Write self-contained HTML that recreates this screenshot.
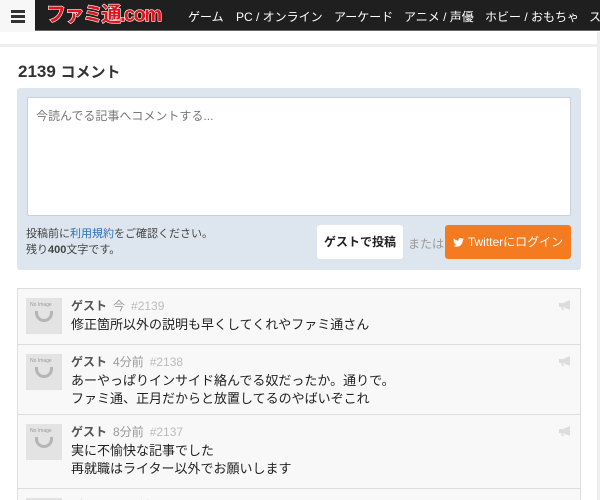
<!DOCTYPE html>
<html><head><meta charset="utf-8"><style>
*{box-sizing:border-box;margin:0;padding:0}
html,body{width:600px;height:500px;overflow:hidden}
body{background:#fff;font-family:"Liberation Sans","Noto Sans CJK JP",sans-serif;position:relative;color:#222}
.abs{position:absolute}
.hdr{left:0;top:0;width:600px;height:31px;background:#1f1f1f;border-bottom:1px solid #666}
.ham{left:0;top:0;width:35px;height:32px;background:#f7f7f7}
.ham i{position:absolute;left:11px;width:14px;height:3px;background:#333}
.logo{left:46px;top:3px;font-weight:bold;font-size:20px;color:#e0141c;-webkit-text-stroke:1.2px #fff;paint-order:stroke fill;letter-spacing:-1.5px;line-height:24px}
.nav{top:8px;font-size:12px;color:#fff;white-space:nowrap}
.line{left:0;top:44px;width:598px;height:3px;background:#eee}
.rs{left:597px;top:32px;width:3px;height:468px;background:#eee}
h1{position:absolute;left:18px;top:61px;font-size:17px;font-weight:bold;color:#333}
h1 span{font-size:15px}
.box{left:17px;top:88px;width:564px;height:182px;background:#dde6ee;border-radius:3px}
.ta{left:27px;top:97px;width:544px;height:119px;background:#fff;border:1px solid #c9d1d8;border-radius:2px;font-size:12px;color:#777;padding:9px 8px}
.note{left:26px;top:226px;font-size:11px;color:#444;line-height:16px}
.note a{color:#2a6ebb}
.gb{left:317px;top:225px;width:86px;height:34px;background:#fff;border-radius:3px;font-size:12px;font-weight:bold;text-align:center;line-height:34px}
.or{left:408px;top:235px;font-size:12px;color:#999}
.tw{left:445px;top:225px;width:126px;height:34px;background:#f47b20;border-radius:3px;color:#fff;font-size:12px;text-align:center;line-height:34px}
.list{left:17px;top:288px;width:564px;height:212px;border:1px solid #ddd;border-bottom:none;background:#f8f8f8;overflow:hidden}
.it{position:absolute;left:0;width:562px;border-bottom:1px solid #ddd;overflow:hidden}
.av{position:absolute;left:8px;top:9px;width:36px;height:36px;background:#e3e3e3}
.av b{position:absolute;left:4px;top:4px;font-size:5px;color:#999;font-weight:normal}
.av i{position:absolute;left:9px;top:13px;width:18px;height:11px;border:3px solid #b5b5b5;border-top:none;border-radius:0 0 10px 10px}
.nm{position:absolute;left:53px;top:8px;font-size:12px;font-weight:bold;color:#555;white-space:nowrap}
.nm span{font-weight:normal;color:#999;margin-left:6px}
.nm em{font-style:normal;font-weight:normal;color:#bbb;margin-left:6px}
.tx{position:absolute;left:53px;top:27px;font-size:13px;line-height:18px;color:#222}
.mg{position:absolute;right:8px;top:10px}
</style></head><body>
<div class="abs hdr"></div>
<div class="abs ham"><i style="top:10px"></i><i style="top:15px"></i><i style="top:20px"></i></div>
<div class="abs logo">ファミ通.com</div>
<div class="abs nav" style="left:188px">ゲーム</div>
<div class="abs nav" style="left:236px">PC / オンライン</div>
<div class="abs nav" style="left:334px">アーケード</div>
<div class="abs nav" style="left:404px">アニメ / 声優</div>
<div class="abs nav" style="left:485px">ホビー / おもちゃ</div>
<div class="abs nav" style="left:589px">ス</div>
<div class="abs line"></div>
<div class="abs rs"></div>
<h1>2139 <span>コメント</span></h1>
<div class="abs box"></div>
<div class="abs ta">今読んでる記事へコメントする...</div>
<div class="abs note">投稿前に<a>利用規約</a>をご確認ください。<br>残り<b>400</b>文字です。</div>
<div class="abs gb">ゲストで投稿</div>
<div class="abs or">または</div>
<div class="abs tw"><svg width="11" height="9" viewBox="0 0 24 20" style="vertical-align:-1px;margin-right:4px"><path d="M24 2.4a10 10 0 0 1-2.8.8A5 5 0 0 0 23.3.4a10 10 0 0 1-3.1 1.2A4.9 4.9 0 0 0 11.8 6 14 14 0 0 1 1.7.9a4.9 4.9 0 0 0 1.5 6.6A4.9 4.9 0 0 1 1 6.9a4.9 4.9 0 0 0 3.9 4.8 4.9 4.9 0 0 1-2.2.1 4.9 4.9 0 0 0 4.6 3.4A9.9 9.9 0 0 1 0 17.3 14 14 0 0 0 7.5 19.5c9.1 0 14-7.5 14-14v-.6A10 10 0 0 0 24 2.4z" fill="#fff"/></svg>Twitterにログイン</div>
<div class="abs list">
<div class="it" style="top:0;height:56px"><div class="av"><b>No Image</b><i></i></div><div class="nm">ゲスト<span>今</span><em>#2139</em></div><div class="tx">修正箇所以外の説明も早くしてくれやファミ通さん</div><svg class="mg" width="14" height="12"><path d="M1 4h4l7-3v10l-7-3H1z M3 8l1 3h2l-1-3" fill="#ddd"/></svg></div>
<div class="it" style="top:56px;height:70px"><div class="av"><b>No Image</b><i></i></div><div class="nm">ゲスト<span>4分前</span><em>#2138</em></div><div class="tx">あーやっぱりインサイド絡んでる奴だったか。通りで。<br>ファミ通、正月だからと放置してるのやばいぞこれ</div><svg class="mg" width="14" height="12"><path d="M1 4h4l7-3v10l-7-3H1z M3 8l1 3h2l-1-3" fill="#ddd"/></svg></div>
<div class="it" style="top:126px;height:74px"><div class="av"><b>No Image</b><i></i></div><div class="nm">ゲスト<span>8分前</span><em>#2137</em></div><div class="tx">実に不愉快な記事でした<br>再就職はライター以外でお願いします</div><svg class="mg" width="14" height="12"><path d="M1 4h4l7-3v10l-7-3H1z M3 8l1 3h2l-1-3" fill="#ddd"/></svg></div>
<div class="it" style="top:200px;height:12px;border:none"><div class="av"></div><div class="nm" style="color:#888">ゲスト<span>10分前</span><em>#2136</em></div></div>
</div>
</body></html>
